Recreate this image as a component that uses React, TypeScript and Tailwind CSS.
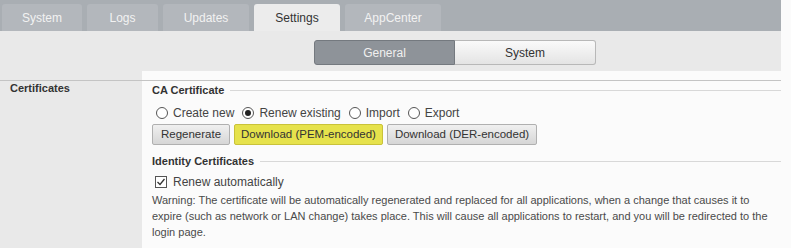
import React from "react";

const tabs = ["System", "Logs", "Updates", "Settings", "AppCenter"];
const tabWidths = ["w-[80px]", "w-[71px]", "w-[86px]", "w-[86px]", "w-[96px]"];

function Radio({ checked, label }: { checked?: boolean; label: string }) {
  return (
    <label className="flex items-center gap-[5px] mr-[8px]">
      <span className="w-[12px] h-[12px] rounded-full border border-[#555] bg-white flex items-center justify-center">
        {checked && <span className="w-[6px] h-[6px] rounded-full bg-[#222]" />}
      </span>
      <span>{label}</span>
    </label>
  );
}

function Legend({ title }: { title: string }) {
  return (
    <div className="flex items-center h-[14px]">
      <span className="font-bold text-[#333] pr-[6px]">{title}</span>
      <div className="flex-1 h-px bg-[#d8d8d8]" />
    </div>
  );
}

export default function App() {
  return (
    <div className="w-[791px] h-[248px] overflow-hidden bg-[#fbfbfb] text-[11px] text-[#444] font-['Liberation_Sans',Arial,sans-serif]">
      <div className="w-[781px]">
        {/* Tabs */}
        <div className="h-[31px] bg-[#a9aeb3] flex items-end gap-[5px] pl-[2px]">
          {tabs.map((t, i) => (
            <div
              key={t}
              className={`${tabWidths[i]} h-[27px] rounded-t-[3px] flex items-center justify-center text-[12px] ${
                t === "Settings" ? "bg-[#ececec] text-[#333]" : "bg-[#b3b7bc] text-[#f2f2f2]"
              }`}
            >
              {t}
            </div>
          ))}
        </div>

        {/* Sub navigation */}
        <div className="h-[40px] bg-[#e9e9e9] pl-[314px] pt-[9px]">
          <div className="flex h-[25px] text-[12px]">
            <div className="w-[141px] flex items-center justify-center bg-[#8e9399] border border-[#74797f] rounded-l-[3px] text-[#f0f0f0]">
              General
            </div>
            <div className="w-[141px] flex items-center justify-center bg-gradient-to-b from-[#fafafa] to-[#e4e4e4] border border-l-0 border-[#b8b8b8] rounded-r-[3px] text-[#333]">
              System
            </div>
          </div>
        </div>

        {/* Previous section tail */}
        <div className="flex h-[9px]">
          <div className="w-[142px] bg-[#e9e9e9]" />
          <div className="flex-1 bg-[#fbfbfb]" />
        </div>
        <div className="h-px bg-[#c4c4c4]" />

        {/* Certificates */}
        <div className="flex h-[167px]">
          <div className="w-[142px] bg-[#e9e9e9] pl-[10px]">
            <div className="font-bold text-[#333] leading-[14px]">Certificates</div>
          </div>
          <div className="flex-1 bg-[#fbfbfb] pl-[10px] pt-[2px]">
            <Legend title="CA Certificate" />
            <div className="flex items-center h-[16px] mt-[8px] pl-[4px] text-[12px] text-[#444]">
              <Radio label="Create new" />
              <Radio checked label="Renew existing" />
              <Radio label="Import" />
              <Radio label="Export" />
            </div>
            <div className="flex gap-[4px] mt-[3px] h-[21px] text-[11.5px]">
              <button className="w-[78px] border border-[#b0b0b0] rounded-[2px] bg-gradient-to-b from-[#f0f0f0] to-[#d6d6d6] text-[#333]">
                Regenerate
              </button>
              <button className="w-[149px] border border-[#c9c23a] rounded-[2px] bg-[#e6e24c] text-[#333]">
                Download (PEM-encoded)
              </button>
              <button className="w-[150px] border border-[#b0b0b0] rounded-[2px] bg-gradient-to-b from-[#f0f0f0] to-[#d6d6d6] text-[#333]">
                Download (DER-encoded)
              </button>
            </div>
            <div className="mt-[9px]">
              <Legend title="Identity Certificates" />
            </div>
            <div className="flex items-center h-[16px] mt-[6px] pl-[3px] gap-[6px] text-[12px]">
              <span className="w-[12px] h-[12px] border border-[#555] bg-white flex items-center justify-center">
                <svg width="10" height="10" viewBox="0 0 10 10">
                  <path d="M1.5 5 L4 7.5 L8.5 2" fill="none" stroke="#333" strokeWidth="1.3" />
                </svg>
              </span>
              <span>Renew automatically</span>
            </div>
            <p className="mt-[2px] leading-[16px] pr-[12px] text-[#4a4a4a]">
              Warning: The certificate will be automatically regenerated and replaced for all applications, when a change that causes it to
              expire (such as network or LAN change) takes place. This will cause all applications to restart, and you will be redirected to the
              login page.
            </p>
          </div>
        </div>
      </div>
    </div>
  );
}
